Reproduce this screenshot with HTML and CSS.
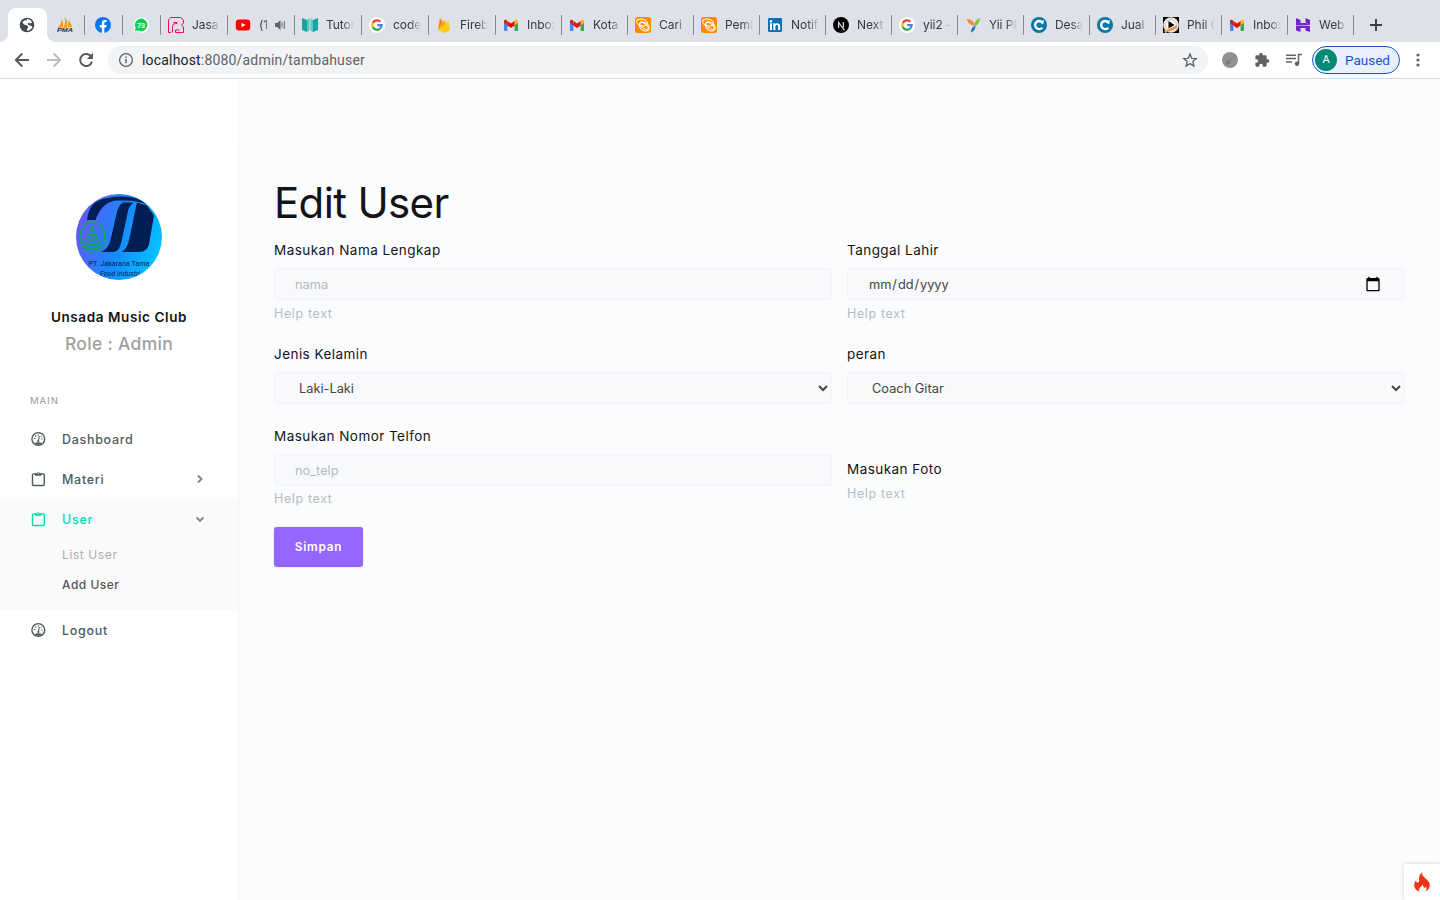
FILE: index.html
```html
<!DOCTYPE html>
<html lang="id">
<head>
<meta charset="utf-8">
<title>Edit User</title>
<link rel="stylesheet" href="styles.css">
</head>
<body>
<svg class="defs" width="0" height="0">
  <symbol id="gmail" viewBox="0 0 16 16"><path fill="#4285f4" d="M1 4.500l3.400 2.600V14H2a1 1 0 0 1-1-1z"/><path fill="#34a853" d="M15 4.500l-3.400 2.600V14H14a1 1 0 0 0 1-1z"/><path fill="#fbbc04" d="M11.600 3.900l1.100-.9C13.700 2.200 15 2.900 15 4.200v1.600l-3.400 2.600z"/><path fill="#c5221f" d="M1 5.800V4.200C1 2.900 2.300 2.200 3.300 3l1.100.9v4.500z"/><path fill="#ea0b0b" d="M4.400 8.400V3.900L8 6.600l3.600-2.700v4.500L8 11z"/></symbol>
  <symbol id="google" viewBox="0 0 16 16"><circle cx="8" cy="8" r="8" fill="#fff"/><g fill="none" stroke-width="2.300"><path stroke="#ea4335" d="M3.800 6A4.700 4.700 0 0 1 11.400 4.700"/><path stroke="#fbbc05" d="M3.800 6a4.700 4.700 0 0 0 0 4.200"/><path stroke="#34a853" d="M3.800 10.100a4.700 4.700 0 0 0 7.400 1.400"/><path stroke="#4285f4" d="M8.200 8.200h4.500a4.700 4.700 0 0 1-1.500 3.300"/></g></symbol>
  <symbol id="cari" viewBox="0 0 16 16"><rect width="16" height="16" rx="2.500" fill="#ff8a00"/><g fill="none" stroke="#fff" stroke-width="1"><ellipse cx="7" cy="5.500" rx="5.500" ry="3.300" transform="rotate(14 7 5.500)"/><ellipse cx="9.300" cy="9.500" rx="5.500" ry="4" transform="rotate(38 9.300 9.500)"/><ellipse cx="9" cy="8.800" rx="5" ry="2.200" transform="rotate(38 9 8.800)"/></g></symbol>
  <symbol id="cpanel" viewBox="0 0 16 16"><circle cx="8" cy="8" r="8" fill="#0878a4"/><path d="M11.300 5.300A4.100 4.100 0 1 0 11.300 10.800" fill="none" stroke="#fff" stroke-width="2.400"/><path d="M13 2.800L12.200 7.200 9 5.800z" fill="#fff"/></symbol>
  <symbol id="gauge" viewBox="0 0 16 16"><circle cx="8.300" cy="8" r="6.400" fill="none" stroke="currentColor" stroke-width="1.400"/><path fill="currentColor" d="M4.300 12.300q4-2 8 0-4 3-8 0z"/><path d="M8.200 10.500l1.200-5.300M4 7.500h1.400M5.300 4.700l.9.900M8.300 3.400v1.300M11.300 8h1.400M11.500 5l-.6.700" stroke="currentColor" stroke-width="1.100"/><circle cx="8.300" cy="10" r="1.100" fill="currentColor"/></symbol>
  <symbol id="clip" viewBox="0 0 16 16"><rect x="2.500" y="2.900" width="11.800" height="11.600" rx="1" fill="none" stroke="currentColor" stroke-width="1.400"/><path fill="currentColor" d="M5.100 2.200h1.700a1.600 1.600 0 0 1 3 0h1.700v2.500H5.100z"/><circle cx="8.300" cy="2.400" r=".6" fill="#fff"/></symbol>
</svg>

<header class="browser">
  <nav class="tabs">
    <div class="tab active"><svg width="16" height="16" viewBox="0 0 16 16"><circle cx="8" cy="8" r="7.300" fill="#454a4e"/><path fill="#fff" d="M7 2.100c2-.5 4.600.7 5.700 2.700L10.700 6 9 5.600 8.500 7 10 8l2 .1 1.700 1c-.6 2.300-2.500 4.200-5 4.700l-.1-2.200 1-1.700L7.900 8.500 5.500 8 3 6.200C3.500 5 4.500 3.900 5.700 3.300l1.500.7z" transform="rotate(8 8 8)"/><path fill="#454a4e" d="M5 8.500l3 .3 1.300 1.300-1.500 1.300-.4 3L4.500 13z"/></svg></div>
    <div class="tab mini"><svg width="16" height="16" viewBox="0 0 16 16"><path fill="#f89c0e" d="M1 11Q4.500 7 4.500 3L6 5V10.500zM6.500 11Q9 5 7.500 0q4 5 2.500 10.500zM10.800 10.500Q12 6 11 3q3.500 3.500 4 7z"/><text x="0" y="15.300" class="pma" textLength="16" lengthAdjust="spacingAndGlyphs">PMA</text></svg></div>
    <div class="tab mini"><svg width="16" height="16" viewBox="0 0 16 16"><circle cx="8" cy="8" r="8" fill="#0877f2"/><path fill="#fff" d="M6.900 16v-5.600H4.800V8h2.100V6.300c0-2.200 1.200-3.300 3.100-3.300l1.700.1v2h-1C9.600 5.100 9.300 5.700 9.300 6.400V8h2.300l-.4 2.400H9.300V16z"/></svg></div>
    <div class="tab mini"><svg width="16" height="16" viewBox="0 0 16 16"><path fill="#fff" d="M.5 15.500l1-4A7.700 7.700 0 1 1 5 15z"/><path fill="#0bce50" d="M1.800 14.300l.9-3.200A6.300 6.300 0 1 1 5.200 13.500z"/><text x="8" y="10.600" text-anchor="middle" class="wa">73</text></svg></div>
    <div class="tab"><svg width="16" height="16" viewBox="0 0 16 16"><path fill="none" stroke="#f30b56" d="M3 15.500H.5V2.500l2-2h10l3 2.500v3l-2 2 2 2v5.500h-8v-2.500h4M4.500 15.500V9.500q0-3 3-3h1.500v-1H5.500"/></svg><span class="title">Jasa</span></div>
    <div class="tab audio"><svg width="16" height="16" viewBox="0 0 16 16"><rect x=".8" y="2.600" width="14.400" height="10.900" rx="3" fill="#f00"/><path fill="#fff" d="M6.500 5.700v4.600l4-2.300z"/></svg><span class="title">(1</span><svg class="speaker" width="11" height="12" viewBox="0 0 11 12"><path fill="#5f6368" d="M0 4h2.200L5.500 1v10L2.200 8H0z"/><path d="M7 3.500v5M9.300 2v8" stroke="#5f6368" fill="none"/></svg></div>
    <div class="tab"><svg width="16" height="16" viewBox="0 0 16 16"><path fill="#12a8a2" d="M0 1l5 2v12l-5-2zM16 1l-5 2v12l5-2z"/><path fill="#57c7c1" d="M5 3l2.500-1.500v12L5 15zM11 3L8.500 1.500v12L11 15z"/></svg><span class="title">Tutor</span></div>
    <div class="tab"><svg width="16" height="16"><use href="#google"/></svg><span class="title">code</span></div>
    <div class="tab"><svg width="16" height="16" viewBox="0 0 16 16"><path fill="#f6820d" d="M2 13L4 1l2.800 4z"/><path fill="#ffa000" d="M2 13L8.300 3l2 4z"/><path fill="#ffca18" d="M2 13L12.500 4 14 13l-5.500 3z"/></svg><span class="title">Fireb</span></div>
    <div class="tab"><svg width="16" height="16"><use href="#gmail"/></svg><span class="title">Inbox</span></div>
    <div class="tab"><svg width="16" height="16"><use href="#gmail"/></svg><span class="title">Kota</span></div>
    <div class="tab"><svg width="16" height="16"><use href="#cari"/></svg><span class="title">Cari</span></div>
    <div class="tab"><svg width="16" height="16"><use href="#cari"/></svg><span class="title">Pemb</span></div>
    <div class="tab"><svg width="16" height="16" viewBox="0 0 16 16"><rect x="1" y="1" width="14" height="14" rx="1" fill="#0a73b7"/><path fill="#fff" d="M3 6.300h2V13H3zM6.300 6.300h1.900v1c1-1.700 4.900-1.700 4.900 1.700v4h-2V9.500c0-2-2.700-2-2.700 0V13H6.300z"/><circle cx="4" cy="4.200" r="1.200" fill="#fff"/></svg><span class="title">Notif</span></div>
    <div class="tab"><svg width="16" height="16" viewBox="0 0 16 16"><circle cx="8" cy="8" r="8"/><path d="M5.600 11V5.500L11.500 13.300M10.400 4.900v5.500" fill="none" stroke="#ddd" stroke-width="1.200"/></svg><span class="title">Next</span></div>
    <div class="tab"><svg width="16" height="16"><use href="#google"/></svg><span class="title">yii2 -</span></div>
    <div class="tab"><svg width="16" height="16" viewBox="0 0 16 16"><path fill="#f8862b" d="M1.500 2Q9 2 9 8.500 3 7.500 1.500 2z"/><path fill="#79c643" d="M14.500 1Q15.500 7 9.500 9.500 8.500 4 14.500 1z"/><path fill="#2077c7" d="M10.500 8.500Q10.500 14 6 15.500 5.500 10.500 10.500 8.500z"/></svg><span class="title">Yii PH</span></div>
    <div class="tab"><svg width="16" height="16"><use href="#cpanel"/></svg><span class="title">Desa</span></div>
    <div class="tab"><svg width="16" height="16"><use href="#cpanel"/></svg><span class="title">Jual</span></div>
    <div class="tab"><svg width="16" height="16" viewBox="0 0 16 16"><path d="M0 0h16v16H0z"/><circle cx="8" cy="8" r="7.800" fill="#eee9df"/><circle cx="8" cy="8" r="5.400" fill="#fff" stroke="#aaa" stroke-width=".6"/><path d="M5.500 4l6 4-6 3.500z"/><path d="M1.500 15L14 9.500" stroke="#d89644" stroke-width="2.500"/><path d="M2 13.500L13 8.500" stroke="#f4d09b"/></svg><span class="title">Phil C</span></div>
    <div class="tab"><svg width="16" height="16"><use href="#gmail"/></svg><span class="title">Inbox</span></div>
    <div class="tab"><svg width="16" height="16" viewBox="0 0 16 16"><path fill="#7127c8" d="M1 1l4.500 2v3H11l4 2.300H1zM15 15l-4.500-1.500V11H5L1 8.700 15 9zM10.500 5.500V1l4.500 2v5zM5.500 10.500V15L1 13.500V9z"/></svg><span class="title">Web</span></div>
    <svg class="plus" width="12" height="12" viewBox="0 0 12 12"><path d="M6 0v12M0 6h12" stroke="#3c4043" stroke-width="1.900"/></svg>
  </nav>
  <div class="toolbar">
    <svg width="16" height="16" viewBox="0 0 16 16" class="tool"><path d="M15 8H2M8.300 1.500L1.800 8l6.500 6.500"/></svg>
    <svg width="16" height="16" viewBox="0 0 16 16" class="tool off"><path d="M1 8h13M7.700 1.500L14.200 8l-6.500 6.500"/></svg>
    <svg width="16" height="16" viewBox="0 0 16 16" class="tool"><path d="M13.400 5A6 6 0 1 0 14 9.500"/><path class="solid" d="M15 .8v6.200H8.800z"/></svg>
    <div class="omnibox">
      <svg width="16" height="16" viewBox="0 0 16 16"><circle cx="8" cy="8" r="6.400" fill="none" stroke="#5f6368" stroke-width="1.300"/><path d="M8 7v4.300M8 4.400v1.500" stroke="#5f6368" stroke-width="1.500"/></svg>
      <span class="url"><b>localhost</b>:8080/admin/tambahuser</span>
      <svg width="16" height="16" viewBox="0 0 16 16"><path d="M8 2l1.700 4.300 4.600.3-3.500 3 1.100 4.500L8 11.600l-3.900 2.500 1.100-4.500-3.500-3 4.600-.3z" fill="none" stroke="#5f6368" stroke-width="1.300"/></svg>
    </div>
    <svg class="ext" width="16" height="16" viewBox="0 0 16 16"><circle cx="8" cy="8" r="8" fill="#929292"/><path d="M4 11.500l2-3 2.500 1.500-2 2.500zM7.500 8.500l5-5" stroke="#777" fill="#808080"/></svg>
    <svg class="ext puzzle" width="16" height="16" viewBox="0 0 24 24"><path fill="#5f6368" d="M20.500 11H19V7a2 2 0 0 0-2-2h-4V3.500a2.500 2.500 0 0 0-5 0V5H4a2 2 0 0 0-2 2v3.800h1.500a2.700 2.700 0 0 1 0 5.400H2V20a2 2 0 0 0 2 2h3.800v-1.500a2.700 2.700 0 0 1 5.400 0V22H17a2 2 0 0 0 2-2v-4h1.500a2.500 2.500 0 0 0 0-5z"/></svg>
    <svg class="ext music" width="16" height="16" viewBox="0 0 16 16"><path d="M0 3.200h10M0 6.600h10M0 10h6M12.500 11.500V2.500H16" fill="none" stroke="#5f6368" stroke-width="1.500"/><circle cx="11" cy="11.700" r="2.200" fill="#5f6368"/></svg>
    <div class="profile"><span class="avatar">A</span><span>Paused</span></div>
    <svg class="dots" width="4" height="14" viewBox="0 0 4 14"><g fill="#5f6368"><circle cx="2" cy="2" r="1.600"/><circle cx="2" cy="7" r="1.600"/><circle cx="2" cy="12" r="1.600"/></g></svg>
  </div>
</header>

<div class="page">
  <aside class="sidebar">
    <svg class="logo" width="86" height="86" viewBox="0 0 86 86">
      <defs><linearGradient id="blue" x1="0" y1=".35" x2="1" y2=".65"><stop offset="0" stop-color="#6757f2"/><stop offset=".5" stop-color="#1689fd"/><stop offset="1" stop-color="#04c5ff"/></linearGradient><clipPath id="round"><circle cx="43" cy="43" r="43"/></clipPath></defs>
      <g clip-path="url(#round)"><rect width="86" height="86" fill="url(#blue)"/>
      <path fill="#001f52" d="M11 26Q13 6 32 4q26-5 40 7-10-5-26-4.500h-6Q26 8 19.500 26z"/>
      <path fill="#001f52" d="M58 8.500Q52 12 51 22l-5 23q-2 13-9 13H25q8-3 10-14l5-22Q42 11 47 8.500z"/>
      <path fill="#001f52" d="M61 8.500l10 3 7 10-5 29q-2 7.500-10 7.500H45.500q6-3 8-14l4.500-22Q60 12 61 8.500z"/>
      <ellipse cx="16.500" cy="43" rx="12.500" ry="15" fill="none" stroke="#0bb13e" stroke-width="1.200"/>
      <g fill="none" stroke="#05af43" stroke-width="1.900"><circle cx="16.500" cy="34" r=".8"/><path d="M14.500 36q2 3 4 0M12.500 39.500q4 4 8 0M10.500 43.500q6 5 12 0M9 47.500q7.500 6 15 0M8 51.500q8.500 7 17 0"/></g>
      <text x="12.500" y="72" class="logo-a" textLength="61" lengthAdjust="spacingAndGlyphs">PT. Jakarana Tama</text><text x="24" y="82" class="logo-b" textLength="40" lengthAdjust="spacingAndGlyphs">Food Industri</text></g>
    </svg>
    <h2 class="club">Unsada Music Club</h2>
    <p class="role">Role : Admin</p>
    <p class="section">MAIN</p>
    <a class="item"><svg width="16" height="16"><use href="#gauge"/></svg><span>Dashboard</span></a>
    <a class="item"><svg width="16" height="16"><use href="#clip"/></svg><span>Materi</span><svg class="chev" width="10" height="10" viewBox="0 0 10 10"><path d="M3 1.500L6.500 5 3 8.500"/></svg></a>
    <div class="open">
      <a class="item current"><svg width="16" height="16"><use href="#clip"/></svg><span>User</span><svg class="chev" width="10" height="10" viewBox="0 0 10 10"><path d="M1.500 3.300L5 6.800l3.500-3.500"/></svg></a>
      <a class="sub muted">List User</a>
      <a class="sub">Add User</a>
    </div>
    <a class="item"><svg width="16" height="16"><use href="#gauge"/></svg><span>Logout</span></a>
  </aside>
  <main class="content">
    <h1>Edit User</h1>
    <form class="form">
      <div class="field first"><label>Masukan Nama Lengkap</label><input class="control" type="text" placeholder="nama"><small>Help text</small></div>
      <div class="field first"><label>Tanggal Lahir</label><input class="control date" type="date"><small>Help text</small></div>
      <div class="field second"><label>Jenis Kelamin</label><select class="control"><option>Laki-Laki</option></select></div>
      <div class="field second"><label>peran</label><select class="control"><option>Coach Gitar</option></select></div>
      <div class="field third"><label>Masukan Nomor Telfon</label><input class="control" type="text" placeholder="no_telp"><small class="tight">Help text</small></div>
      <div class="field third photo"><label>Masukan Foto</label><small>Help text</small></div>
      <button type="button">Simpan</button>
    </form>
  </main>
</div>
<div class="debug"><svg width="16" height="20" viewBox="0 0 16 20"><path fill="#ee3310" d="M8.500 0c-1 2.500.3 4 2.500 6 2.500 2.300 4.800 4 4.800 7 0 3-1.800 5.300-4.600 6.500 1.600-1.700 1.700-3.500.8-5-.4 1-1 1.400-1.700 1.200-1.300-.4-.8-2-1.600-3.500-.6 2-3.700 3.300-3.700 5.500 0 .8.300 1.400.9 1.900C2.500 18.700.2 16.200.2 13c0-2 .8-3.500 2-4.800 0 1.500.3 2.300 1.200 2.300C5.500 10.500 5 8.500 5 6.500 5 3.500 6.500 1.500 8.500 0z"/></svg></div>
</body>
</html>
```
FILE: styles.css
```css
* { box-sizing: border-box; }
body { margin: 0; width: 1440px; height: 900px; overflow: hidden; display: flex; flex-direction: column; background: #fbfcfe; font-family: Inter, sans-serif; color: #121416; }
.defs { position: absolute; }
.browser { flex: none; }
.tabs { height: 42px; background: #dee1e8; display: flex; align-items: flex-end; padding-left: 8px; }
.tab { position: relative; width: 66px; height: 34px; padding: 0 0 0 7px; display: flex; align-items: center; gap: 8px; flex: none; }
.tab > svg { flex: none; }
.tab::after { content: ""; position: absolute; right: 0; top: 7px; width: 1px; height: 20px; background: #85888d; }
.tab:nth-child(n+5):nth-child(-n+9) { width: 67px; }
.tab.mini { width: 38px; padding-left: 10px; }
.tab.active { width: 39px; padding-left: 11px; background: #fff; border-radius: 8px 8px 0 0; }
.tab.active::after { display: none; }
.tab.active::before { content: ""; position: absolute; left: -8px; right: -8px; bottom: 0; height: 8px; background: radial-gradient(circle at 0 0, transparent 7.500px, #fff 8px) left / 8px 8px no-repeat, radial-gradient(circle at 100% 0, transparent 7.500px, #fff 8px) right / 8px 8px no-repeat; }
.title { width: 28px; overflow: hidden; white-space: nowrap; font-size: 12px; letter-spacing: -.05px; line-height: 16px; color: #36393d; -webkit-mask-image: linear-gradient(90deg, #000 60%, transparent); mask-image: linear-gradient(90deg, #000 60%, transparent); }
.audio .title { width: 10px; }
.audio .speaker { margin-left: -2px; }
.pma { font: italic bold 5.500px "Liberation Sans", sans-serif; fill: #29285c; }
.wa { font: bold 7px Roboto, sans-serif; fill: #fff; }
.plus { margin: 0 0 11px 16px; }
.toolbar { height: 37px; background: #fff; border-bottom: 1px solid #dadce3; display: flex; align-items: center; padding-left: 14px; }
.tool { margin-right: 16px; fill: none; stroke: #55595e; stroke-width: 1.900; }
.tool.off { stroke: #babcbe; }
.tool .solid { fill: #55595e; stroke: none; }
.tool:nth-child(3) { margin-right: 14px; }
.omnibox { width: 1100px; height: 28px; border-radius: 14px; background: #f1f3f4; display: flex; align-items: center; gap: 8px; padding: 0 10px; flex: none; }
.url { flex: 1; font: 14px/20px Roboto, sans-serif; letter-spacing: .18px; color: #5f6368; }
.url b { font-weight: 400; color: #202124; }
.ext { margin-left: 14px; flex: none; }
.puzzle { margin-left: 16px; }
.music { margin-left: 16px; }
.profile { width: 88px; height: 28px; margin-left: 10px; border: 1px solid #1a56c9; border-radius: 14px; background: #e8f0fe; display: flex; align-items: center; gap: 8px; padding-left: 2px; font: 13.500px/16px Roboto, sans-serif; color: #2055c5; flex: none; }
.avatar { width: 22px; height: 22px; border-radius: 50%; background: #008a78; color: #fff; font-size: 11px; line-height: 22px; text-align: center; }
.dots { margin-left: 16px; }
.page { flex: 1; display: flex; min-height: 0; }
.sidebar { width: 239px; padding-top: 115px; background: linear-gradient(#f1f2f7, #f1f2f7) right 64px / 1px 100% no-repeat, linear-gradient(#fff, #fff) left / 238px 100% no-repeat; display: flex; flex-direction: column; flex: none; }
.sidebar .item, .sub { width: 238px; }
.logo { margin: 0 0 26px 76px; flex: none; }
.logo-a { font: 8px Roboto, sans-serif; fill: #06214e; }
.logo-b { font: italic 7px Roboto, sans-serif; fill: #06214e; }
.club { margin: 0; width: 238px; text-align: center; font-size: 13.500px; line-height: 22px; font-weight: 600; letter-spacing: .6px; }
.role { margin: 1px 0 0; width: 238px; text-align: center; font-size: 17.500px; line-height: 30px; font-weight: 500; letter-spacing: .3px; color: #a0a0a0; }
.section { margin: 34px 0 10px 30px; font-size: 9.500px; line-height: 16px; letter-spacing: 1px; color: #999; }
.item { height: 40px; padding: 0 33px 0 30px; display: flex; align-items: center; font-size: 12.500px; font-weight: 500; letter-spacing: .7px; color: #4f5b5c; }
.item > svg:first-child { margin-right: 16px; margin-top: -1px; }
.chev { margin-left: auto; fill: none; stroke: #7b8587; stroke-width: 1.900; }
.open { width: 238px; height: 111px; background: #fafafa; }
.current { color: #09d9af; }
.sub { display: block; height: 30px; padding-left: 62px; line-height: 32px; font-size: 12px; font-weight: 500; letter-spacing: .5px; color: #555; }
.sub.muted { color: #abb0b0; font-weight: 400; letter-spacing: .6px; }
.content { flex: 1; padding: 94px 35px 0; }
h1 { margin: 0; font-size: 42px; line-height: 60px; font-weight: 400; letter-spacing: -.65px; }
.form { display: grid; grid-template-columns: 558px 558px; column-gap: 15px; margin-top: 7px; }
.field { display: flex; flex-direction: column; }
.first { height: 104px; }
.second { height: 82px; }
.third { height: 87px; }
label { font-size: 13.500px; line-height: 20px; letter-spacing: .45px; margin-bottom: 8px; }
.control { width: 100%; height: 32px; margin: 0; border: 1px solid #f1f3f7; border-radius: 3px; background: #f8f9fb; padding: 0 20px; font: 12.800px Inter, sans-serif; color: #444; }
.control::placeholder { color: #b4bac1; opacity: 1; }
.date { letter-spacing: -.05px; }
.date::-webkit-calendar-picker-indicator { width: 16px; height: 16px; padding: 0; margin: 0 3px 1px 0; background-size: 16px 16px; }
select.control { padding: 0 0 0 20px; }
small { font-size: 12.500px; line-height: 18px; letter-spacing: .63px; color: #b4bcc5; margin-top: 5px; }
small.tight { margin-top: 4px; }
.photo { padding-top: 33px; }
.photo label { margin-bottom: 1px; }
button { width: 89px; height: 40px; margin: 14px 0 0; border: 0; padding: 0; border-radius: 3px; background: #9466ff; box-shadow: 0 0 2px rgba(80, 80, 120, .3); color: #fff; font: 600 11.800px Inter, sans-serif; letter-spacing: .8px; }
.debug { position: absolute; right: 0; bottom: 0; width: 36px; height: 36px; background: #fff; box-shadow: 0 0 4px rgba(0, 0, 0, .18); display: flex; align-items: center; justify-content: center; }
```
